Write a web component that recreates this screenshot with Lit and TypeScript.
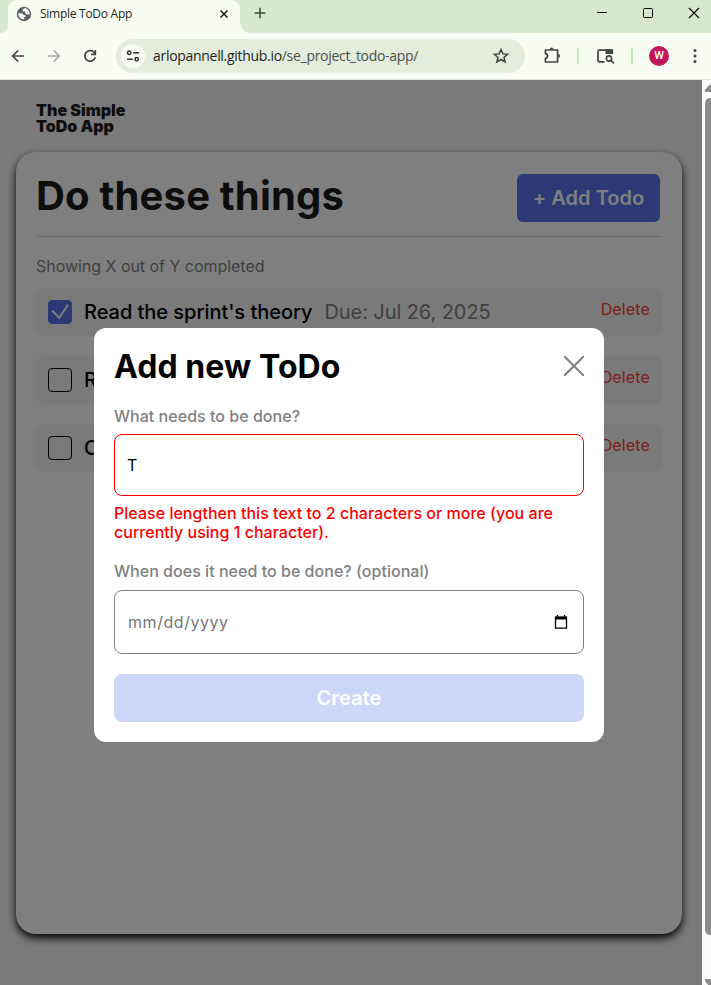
import { LitElement, html, css, nothing } from "lit";
import { customElement, property } from "lit/decorators.js";

@customElement("browser-chrome")
class BrowserChrome extends LitElement {
  static styles = css`
    :host { display: block; height: 80px; font-family: "Open Sans", "Noto Sans", sans-serif; color: #1c1f1a; }
    svg { display: block; flex: none; }
    .strip { display: flex; height: 33px; background: #d8e8cc; align-items: stretch; }
    .lead { width: 8px; background: #f9fcf2; }
    .lead i { display: block; height: 33px; background: #d8e8cc; border-bottom-right-radius: 9px; }
    .tab { box-sizing: border-box; width: 232px; background: #f9fcf2; border-radius: 9px 9px 0 0; display: flex; align-items: center; padding: 0 11px 6px 8px; }
    .tab .name { margin-left: 8px; font-size: 12px; letter-spacing: -0.27px; line-height: 16px; flex: 1; white-space: nowrap; }
    .rest { flex: 1; background: #f9fcf2; }
    .rest div { box-sizing: border-box; height: 33px; background: #d8e8cc; border-bottom-left-radius: 11px; display: flex; align-items: center; padding: 0 11px 7px 14px; }
    .space { flex: 1; }
    .win { display: flex; gap: 34px; }
    .bar { box-sizing: border-box; height: 47px; background: #f9fcf2; border-bottom: 1px solid #dde0d8; display: flex; align-items: center; padding-left: 10px; }
    .nav { display: flex; gap: 20px; width: 106px; }
    .omni { box-sizing: border-box; width: 409px; height: 34px; border-radius: 17px; background: #e3ecdd; display: flex; align-items: center; padding: 0 15px 0 5px; }
    .tune { width: 24px; height: 24px; border-radius: 12px; background: #f9fcf2; display: grid; place-items: center; }
    .url { margin-left: 8px; font-size: 14px; line-height: 20px; letter-spacing: -0.3px; white-space: nowrap; flex: 1; }
    .path { color: #4b5147; }
    .sep { width: 2px; height: 16px; border-radius: 1px; background: #b9efa9; }
    .avatar { width: 20px; height: 20px; border-radius: 10px; background: #c2185b; color: #fff; font: 500 11px/20px Roboto, sans-serif; text-align: center; }
    .ext { margin-left: 17px; }
    .s1 { margin-left: 15px; }
    .cap { margin-left: 17px; }
    .s2 { margin-left: 15px; }
    .avatar { margin-left: 16px; }
    .dots { margin-left: 24px; }
  `;

  render() {
    return html`
      <div class="strip">
        <div class="lead"><i></i></div>
        <div class="tab">
          <svg width="16" height="16" viewBox="0 0 16 16">
            <circle cx="8" cy="8" r="7.2" fill="#5a5d66" />
            <path d="M2.300 7.300H5.500C7 7.300 7.200 8.300 7.600 9.300H9.600V11H8.200V13.500C5 13.600 2 11 2.300 7.300zM8.700 2.300C7.600 2.500 6.600 3.300 6.600 4.600V5.600H9.200V7.300C10 7.300 10.200 8.600 11.300 8.600H13.600C13.900 5 11.500 2.300 8.700 2.300z" fill="#f9fcf2" />
          </svg>
          <span class="name">Simple ToDo App</span>
          <svg width="10" height="10" viewBox="0 0 10 10"><path d="M1.500 1.500l7 7M8.500 1.500l-7 7" stroke="#1c1f1a" stroke-width="1.600" /></svg>
        </div>
        <div class="rest"><div>
          <svg width="12" height="12" viewBox="0 0 12 12"><path d="M6 .7v10.600M.7 6h10.600" stroke="#3c4a38" stroke-width="1.500" /></svg>
          <span class="space"></span>
          <span class="win">
            <svg width="12" height="12" viewBox="0 0 12 12"><path d="M1 5.500h10" stroke="#000" /></svg>
            <svg width="12" height="12" viewBox="0 0 12 12"><rect x="1.500" y="1.500" width="9" height="9" rx="1" fill="none" stroke="#000" /></svg>
            <svg width="12" height="12" viewBox="0 0 12 12"><path d="M1 1l10 10M11 1L1 11" stroke="#000" stroke-width="1.100" /></svg>
          </span>
        </div></div>
      </div>
      <div class="bar">
        <div class="nav">
          <svg width="16" height="16" viewBox="0 0 16 16"><path d="M14 8H3M8.200 2.500L2.700 8l5.500 5.500" fill="none" stroke="#3c4a38" stroke-width="1.700" /></svg>
          <svg width="16" height="16" viewBox="0 0 16 16"><path d="M2 8h11M7.800 2.500L13.300 8l-5.500 5.500" fill="none" stroke="#a3a99f" stroke-width="1.700" /></svg>
          <svg width="16" height="16" viewBox="0 0 16 16"><path d="M13.300 9.300A5.300 5.300 0 1 1 12 4.200L13.300 5.600" fill="none" stroke="#3c4a38" stroke-width="1.700" /><path d="M13.300 2v4.300H9" fill="none" stroke="#3c4a38" stroke-width="1.700" /></svg>
        </div>
        <div class="omni">
          <div class="tune">
            <svg width="14" height="14" viewBox="0 0 14 14" fill="none" stroke="#2c3529" stroke-width="1.500"><circle cx="3.200" cy="3.800" r="1.700" /><path d="M7.200 3.800H13M1 10.200h5.800" /><circle cx="10.700" cy="10.200" r="1.700" /></svg>
          </div>
          <span class="url">arlopannell.github.io<span class="path">/se_project_todo-app/</span></span>
          <svg width="18" height="18" viewBox="0 0 18 18"><path d="M9 2.600l1.900 4.300 4.700.4-3.600 3.100 1.100 4.600L9 12.500 4.900 15 6 10.400 2.400 7.300l4.700-.4z" fill="none" stroke="#3c463a" stroke-width="1.500" /></svg>
        </div>
        <svg class="ext" width="20" height="20" viewBox="0 0 20 20"><path d="M3.400 4h12.200v12H3.400v-3.600c2.900-.3 2.900-4.500 0-4.800z" fill="none" stroke="#3c4a38" stroke-width="1.700" stroke-linejoin="round" /><path d="M7.700 3.400a1.900 1.900 0 0 1 3.800 0zM16.200 8a1.900 1.900 0 0 1 0 3.800z" fill="#3c4a38" /></svg>
        <div class="sep s1"></div>
        <svg class="cap" width="20" height="18" viewBox="0 0 20 18"><path d="M8.500 14.800H3.200a1.200 1.200 0 0 1-1.200-1.200V4.300a1.200 1.200 0 0 1 1.200-1.200h13v4" fill="none" stroke="#3c4a38" stroke-width="1.700" /><path d="M9.500 2.300h6.300a1.300 1.300 0 0 1 1.300 1.300V7H9.500z" fill="#3c4a38" /><circle cx="13" cy="11.500" r="2.600" fill="none" stroke="#3c4a38" stroke-width="1.600" /><path d="M15 13.500l3 3" stroke="#3c4a38" stroke-width="1.700" /></svg>
        <div class="sep s2"></div>
        <div class="avatar">W</div>
        <svg class="dots" width="4" height="16" viewBox="0 0 4 16" fill="#3c4a38"><circle cx="2" cy="2.500" r="1.500" /><circle cx="2" cy="8" r="1.500" /><circle cx="2" cy="13.500" r="1.500" /></svg>
      </div>
    `;
  }
}

@customElement("todo-item")
class TodoItem extends LitElement {
  @property() name = "";
  @property() due = "";
  @property({ type: Boolean }) done = false;

  static styles = css`
    :host { display: flex; box-sizing: border-box; height: 48px; border-radius: 8px; background: #f4f4f4; padding: 0 12px; align-items: flex-start; }
    .box { box-sizing: border-box; width: 24px; height: 24px; margin-top: 12px; border: 1px solid #000; border-radius: 4px; flex: none; }
    .box.done { background: #5872e8; border-color: #5872e8; }
    svg { display: block; margin: -1px; }
    .name { margin: 12px 0 0 12px; font-size: 20px; line-height: 24px; font-weight: 500; letter-spacing: -0.03px; white-space: nowrap; }
    .date { margin: 12px 0 0 12px; font-size: 20px; line-height: 24px; letter-spacing: -0.08px; color: #808080; white-space: nowrap; flex: 1; }
    .delete { margin: 12px 0 0; font-size: 16px; line-height: 19px; letter-spacing: 0.14px; color: #ff3b3b; }
  `;

  render() {
    return html`
      <div class="box ${this.done ? "done" : ""}">
        ${this.done
          ? html`<svg width="24" height="24" viewBox="0 0 24 24"><path d="M4 10.500l7.200 7.200L20 4.800" fill="none" stroke="#fff" stroke-width="2" /></svg>`
          : nothing}
      </div>
      <span class="name">${this.name}</span>
      <span class="date">${this.due}</span>
      <span class="delete">Delete</span>
    `;
  }
}

@customElement("app-root")
class AppRoot extends LitElement {
  static styles = css`
    :host { display: block; width: 711px; height: 985px; overflow: hidden; font-family: Inter, sans-serif; color: #000; }
    .view { display: flex; height: 905px; }
    .page { position: relative; box-sizing: border-box; width: 702px; background: #f5f5f5; padding: 22px 20px 0 16px; }
    .logo { margin: 0 0 18px 20px; font-size: 16px; line-height: 16px; font-weight: 900; color: #1a1a1a; height: 32px; }
    .card { box-sizing: border-box; height: 782px; border-radius: 20px; background: #fff; padding: 22px 20px 0; box-shadow: 0 4px 8px 0 #000; }
    .head { display: flex; justify-content: space-between; height: 62px; padding-right: 2px; border-bottom: 1px solid #dadada; }
    h1 { margin: -2px 0 0; font-size: 40px; line-height: 48px; font-weight: 700; letter-spacing: 0.2px; color: #1a1a1a; white-space: nowrap; }
    .add { width: 143px; height: 48px; border-radius: 6px; background: #5872e8; color: #fff; font-size: 20px; line-height: 48px; font-weight: 600; letter-spacing: 0.05px; text-align: center; }
    .count { margin: 20px 0 12px; font-size: 16px; line-height: 19px; letter-spacing: -0.03px; color: #808080; }
    .list { display: grid; gap: 20px; }
    .overlay { position: absolute; inset: 0; background: rgba(0, 0, 0, 0.5); padding: 248px 0 0 94px; }
    .modal { box-sizing: border-box; width: 510px; height: 414px; border-radius: 12px; background: #fff; padding: 20px; }
    .title { display: flex; justify-content: space-between; height: 39px; }
    h2 { margin: 0; font-size: 32px; line-height: 37px; font-weight: 700; letter-spacing: 0.07px; }
    .title svg { display: block; margin: 8px 0 0; }
    .label { font-size: 16px; line-height: 19px; color: #808080; font-weight: 500; letter-spacing: 0.03px; }
    .first { margin-top: 20px; }
    .field { box-sizing: border-box; margin-top: 8px; height: 62px; border: 1px solid #f00; border-radius: 8px; padding: 0 12px; display: flex; align-items: center; justify-content: space-between; font-size: 16px; }
    .error { margin: 8px 0 20px; font-size: 16px; line-height: 19px; font-weight: 500; letter-spacing: 0.025px; color: #f00; white-space: nowrap; }
    .date { margin-top: 9px; height: 64px; border-color: #808080; color: #757575; padding: 0 15px 0 13px; letter-spacing: 0.55px; }
    .create { margin-top: 20px; height: 48px; border-radius: 8px; background: #cdd5f8; color: #fff; font-size: 20px; line-height: 48px; font-weight: 600; letter-spacing: 0.1px; text-align: center; }
    .scroll { width: 9px; background: #fcfcfc; overflow: hidden; display: flex; flex-direction: column; padding-left: 3px; box-sizing: border-box; }
    .scroll svg { display: block; flex: none; }
    .thumb { width: 10px; height: 837px; border-radius: 5px; background: #8b8b8b; margin: 6px 0 44px; flex: none; }
  `;

  private todos = [
    { name: "Read the sprint's theory", due: "Due: Jul 26, 2025", done: true },
    { name: "R", due: "", done: false },
    { name: "C", due: "", done: false },
  ];

  render() {
    return html`
      <browser-chrome></browser-chrome>
      <div class="view">
        <div class="page">
          <div class="logo">The Simple<br />ToDo App</div>
          <div class="card">
            <div class="head"><h1>Do these things</h1><div class="add">+ Add Todo</div></div>
            <div class="count">Showing X out of Y completed</div>
            <div class="list">
              ${this.todos.map((t) => html`<todo-item .name=${t.name} .due=${t.due} .done=${t.done}></todo-item>`)}
            </div>
          </div>
          <div class="overlay">
            <div class="modal">
              <div class="title">
                <h2>Add new ToDo</h2>
                <svg width="20" height="20" viewBox="0 0 20 20"><path d="M0 0l20 20M20 0L0 20" stroke="#808080" stroke-width="2" /></svg>
              </div>
              <div class="label first">What needs to be done?</div>
              <div class="field">T</div>
              <div class="error">Please lengthen this text to 2 characters or more (you are<br />currently using 1 character).</div>
              <div class="label">When does it need to be done? (optional)</div>
              <div class="field date">
                <span>mm/dd/yyyy</span>
                <svg width="14" height="14" viewBox="0 0 14 14"><path d="M1.500 2.500h11v10.700h-11z" fill="none" stroke="#000" stroke-width="1.300" /><path d="M1 1.500h12V4.500H1zM2.800 0h1.400v2H2.800zM9.800 0h1.400v2H9.800z" fill="#000" /></svg>
              </div>
              <div class="create">Create</div>
            </div>
          </div>
        </div>
        <div class="scroll">
          <svg width="10" height="12" viewBox="0 0 10 12"><path d="M0 12v-2l4-5h4l2 5v2z" fill="#8b8b8b" /></svg>
          <div class="thumb"></div>
          <svg width="10" height="8" viewBox="0 0 10 8"><path d="M0 0h10v2L7 7H4L0 2z" fill="#8b8b8b" /></svg>
        </div>
      </div>
    `;
  }
}
